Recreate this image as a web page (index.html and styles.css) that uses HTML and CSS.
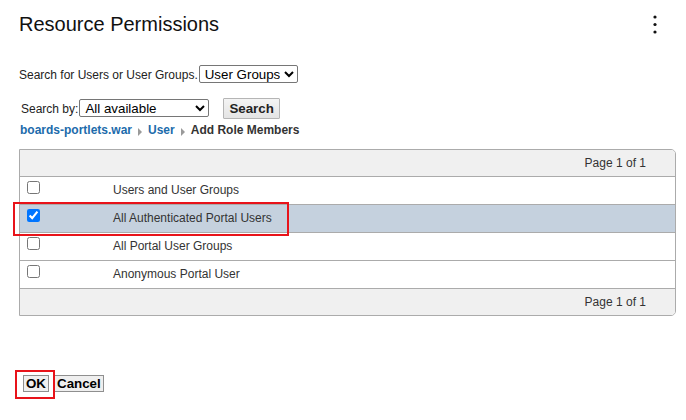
FILE: index.html
```html
<!DOCTYPE html>
<html>
<head>
<meta charset="utf-8">
<link rel="stylesheet" href="styles.css">
</head>
<body>
<div class="page">
  <div class="header">
    <h1 class="title">Resource Permissions</h1>
    <svg class="kebab" width="6" height="22" viewBox="0 0 6 22">
      <circle cx="3" cy="3" r="1.6" fill="#111"/>
      <circle cx="3" cy="10.5" r="1.6" fill="#111"/>
      <circle cx="3" cy="18" r="1.6" fill="#111"/>
    </svg>
  </div>

  <div class="search-for">
    <span>Search for Users or User Groups.</span>
    <select class="sel sel-type">
      <option>User Groups</option>
      <option>Users</option>
    </select>
  </div>

  <div class="search-by">
    <span>Search by:</span>
    <select class="sel sel-by">
      <option>All available</option>
      <option>Current</option>
    </select>
    <button class="btn-search" type="button">Search</button>
  </div>

  <div class="breadcrumb">
    <a href="#" class="crumb-link">boards-portlets.war</a>
    <span class="crumb-sep"></span>
    <a href="#" class="crumb-link">User</a>
    <span class="crumb-sep"></span>
    <span class="crumb-current">Add Role Members</span>
  </div>

  <div class="grid">
    <div class="grid-bar">Page 1 of 1</div>
    <div class="grid-row">
      <div class="cell-check"><input type="checkbox"></div>
      <div class="cell-name">Users and User Groups</div>
    </div>
    <div class="grid-row selected">
      <div class="cell-check"><input type="checkbox" checked></div>
      <div class="cell-name">All Authenticated Portal Users</div>
      <span class="mark mark-row"></span>
    </div>
    <div class="grid-row">
      <div class="cell-check"><input type="checkbox"></div>
      <div class="cell-name">All Portal User Groups</div>
    </div>
    <div class="grid-row">
      <div class="cell-check"><input type="checkbox"></div>
      <div class="cell-name">Anonymous Portal User</div>
    </div>
    <div class="grid-bar grid-bar-bottom">Page 1 of 1</div>
  </div>

  <div class="actions">
    <span class="ok-wrap">
      <button class="btn" type="button">OK</button>
      <span class="mark mark-ok"></span>
    </span>
    <button class="btn" type="button">Cancel</button>
  </div>
</div>
</body>
</html>
```

FILE: styles.css
```css
html, body {
  margin: 0;
  padding: 0;
  background: #fff;
}

html {
  min-height: 420px;
}

body {
  font-family: "Liberation Sans", Arial, sans-serif;
  font-size: 12px;
  color: #222;
  min-height: 420px;
}

.page {
  padding: 0 10px 0 19px;
}

.header {
  display: flex;
  justify-content: space-between;
  align-items: flex-start;
  padding-top: 12px;
}

.title {
  margin: 0;
  font-size: 20px;
  line-height: 24px;
  font-weight: normal;
  color: #111;
}

.kebab {
  margin-top: 2px;
  margin-right: 18px;
}

.search-for {
  display: flex;
  align-items: baseline;
  margin-top: 29px;
  height: 18px;
}

.sel {
  font-family: "Liberation Sans", Arial, sans-serif;
  font-size: 13.33px;
  color: #000;
  height: 18px;
  border: 1px solid #767676;
  border-radius: 2px;
  background: #fff;
  padding: 0 1px;
  margin: 0;
}

.sel-type {
  margin-left: 1px;
  width: 99px;
}

.search-by {
  display: flex;
  align-items: baseline;
  margin-top: 15px;
  height: 21px;
  padding-left: 2px;
}

.sel-by {
  margin-left: 1px;
  width: 130px;
}

.btn-search {
  margin-left: 14px;
  font-family: "Liberation Sans", Arial, sans-serif;
  font-size: 13.33px;
  font-weight: bold;
  color: #222;
  height: 21px;
  padding: 0 5px;
  border: 1px solid #b5b5b5;
  background: linear-gradient(#f4f4f4, #e4e4e4);
  border-radius: 1px;
}

.breadcrumb {
  display: flex;
  align-items: center;
  margin-top: 4px;
  height: 14px;
  padding-left: 1px;
  font-weight: bold;
  font-size: 12px;
}

.crumb-link {
  color: #206bab;
  text-decoration: none;
}

.crumb-sep {
  width: 0;
  height: 0;
  border-left: 4px solid #9a9a9a;
  border-top: 4px solid transparent;
  border-bottom: 4px solid transparent;
  margin: 4px 6px 0 6px;
}

.crumb-current {
  color: #333;
}

.grid {
  margin-top: 12px;
  border: 1px solid #ababab;
  border-radius: 0 5px 5px 0;
  color: #333;
}

.grid-bar {
  background: #f0f0f0;
  height: 26px;
  display: flex;
  align-items: center;
  justify-content: flex-end;
  padding-right: 29px;
  border-radius: 0 4px 0 0;
}

.grid-bar-bottom {
  border-top: 1px solid #ababab;
  border-radius: 0 0 4px 0;
}

.grid-row {
  position: relative;
  display: flex;
  height: 27px;
  border-top: 1px solid #ababab;
  background: #fff;
}

.grid-row.selected {
  background: #c5d1de;
}

.cell-check {
  width: 93px;
  padding-left: 7px;
  box-sizing: border-box;
}

.cell-check input {
  display: block;
  margin: 4px 0 0 0;
  width: 13px;
  height: 13px;
}

.cell-name {
  display: flex;
  align-items: center;
  padding-bottom: 1px;
}

.mark {
  position: absolute;
  z-index: 5;
  border: 2px solid #e8131a;
  box-sizing: border-box;
  pointer-events: none;
}

.mark-row {
  left: -7px;
  top: -3px;
  width: 276px;
  height: 34px;
}

.actions {
  display: flex;
  align-items: center;
  gap: 5px;
  margin-top: 59px;
  padding-left: 4px;
}

.ok-wrap {
  position: relative;
  display: inline-flex;
}

.btn {
  font-family: "Liberation Sans", Arial, sans-serif;
  font-size: 13.33px;
  font-weight: bold;
  color: #000;
  height: 17px;
  padding: 0 2px;
  margin: 0;
  border: 1px solid #8f8f8f;
  background: #efefef;
  border-radius: 0;
  line-height: 15px;
}

.mark-ok {
  left: -8px;
  top: -5px;
  width: 40px;
  height: 29px;
}
```
